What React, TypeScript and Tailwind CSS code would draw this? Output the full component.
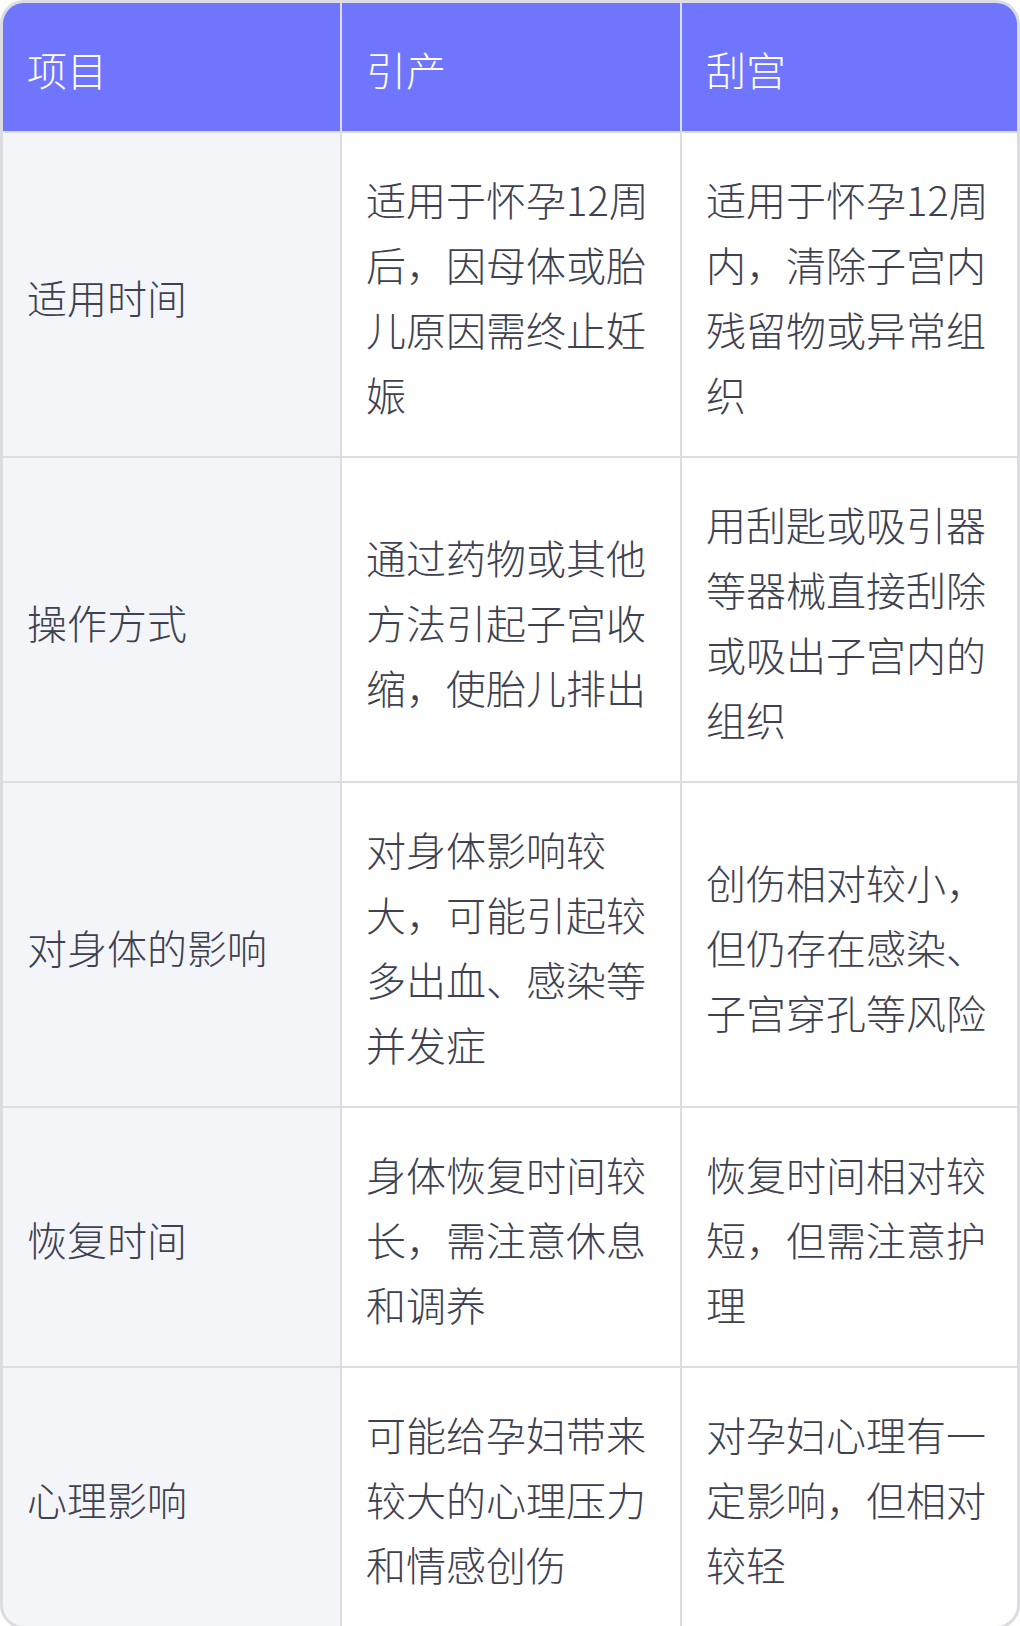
import React from "react";

const rows: [string, string, string][] = [
  ["适用时间", "适用于怀孕12周后，因母体或胎儿原因需终止妊娠", "适用于怀孕12周内，清除子宫内残留物或异常组织"],
  ["操作方式", "通过药物或其他方法引起子宫收缩，使胎儿排出", "用刮匙或吸引器等器械直接刮除或吸出子宫内的组织"],
  ["对身体的影响", "对身体影响较大，可能引起较多出血、感染等并发症", "创伤相对较小，但仍存在感染、子宫穿孔等风险"],
  ["恢复时间", "身体恢复时间较长，需注意休息和调养", "恢复时间相对较短，但需注意护理"],
  ["心理影响", "可能给孕妇带来较大的心理压力和情感创伤", "对孕妇心理有一定影响，但相对较轻"],
];

export default function App() {
  return (
    <div
      className="w-[1020px] bg-white"
      style={{ fontFamily: '"Noto Sans CJK SC", "Noto Sans", sans-serif' }}
    >
      <div className="overflow-hidden rounded-[24px] border-[3px] border-[#dcdde3] bg-[#dcdde3]">
        <div className="grid grid-cols-[337px_338px_335px] gap-[2px] text-[40px] font-light leading-[65px]">
          {["项目", "引产", "刮宫"].map((h) => (
            <div key={h} className="bg-[#7075fe] px-6 pt-[34px] pb-[29px] text-white">
              {h}
            </div>
          ))}
          {rows.map(([a, b, c]) => (
            <React.Fragment key={a}>
              <div className="flex items-center bg-[#f4f5f9] px-6 pt-[34px] pb-[29px] text-[#3d4150]">
                {a}
              </div>
              <div className="flex items-center bg-white px-6 pt-[34px] pb-[29px] text-[#3d4150]">
                <span>{b}</span>
              </div>
              <div className="flex items-center bg-white px-6 pt-[34px] pb-[29px] text-[#3d4150]">
                <span>{c}</span>
              </div>
            </React.Fragment>
          ))}
        </div>
      </div>
    </div>
  );
}
